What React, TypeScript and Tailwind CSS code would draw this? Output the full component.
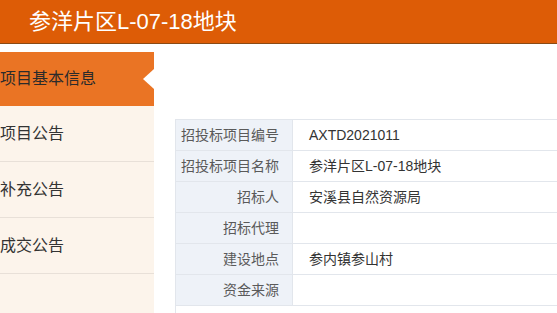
const menu = ["项目公告", "补充公告", "成交公告"];

const rows: [string, string][] = [
  ["招投标项目编号", "AXTD2021011"],
  ["招投标项目名称", "参洋片区L-07-18地块"],
  ["招标人", "安溪县自然资源局"],
  ["招标代理", ""],
  ["建设地点", "参内镇参山村"],
  ["资金来源", ""],
];

export default function App() {
  return (
    <div className="w-[557px] h-[313px] overflow-hidden bg-white font-['Liberation_Sans','Noto_Sans_CJK_SC',sans-serif]">
      <header className="h-[44px] bg-[#dd5c06] border-b border-[#8a4a14] flex items-center pl-[29px]">
        <h1 className="text-white text-[22px] leading-none">参洋片区L-07-18地块</h1>
      </header>

      <div className="flex mt-[8px]">
        <nav className="w-[154px] shrink-0 h-[300px] bg-[#fcf4eb]">
          <div className="relative h-[54px] bg-[#ea7424] flex items-center text-[16px] text-[#2b2b2b]">
            项目基本信息
            <span className="absolute right-0 top-[17px] w-0 h-0 border-y-[10px] border-y-transparent border-r-[11px] border-r-white" />
          </div>
          {menu.map((m) => (
            <div
              key={m}
              className="h-[56px] border-b border-[#e8e0d8] flex items-center text-[16px] text-[#333]"
            >
              {m}
            </div>
          ))}
        </nav>

        <div className="ml-[21px] mt-[67px] w-[420px] shrink-0 border-t border-l border-[#e2e6ec] text-[14px]">
          {rows.map(([k, v]) => (
            <div key={k} className="flex h-[31px] border-b border-[#e2e6ec]">
              <div className="w-[117px] shrink-0 bg-[#eef2f8] border-r border-[#e2e6ec] flex items-center justify-end pr-[13px] whitespace-nowrap text-[#5a5a5a]">
                {k}
              </div>
              <div className="flex-1 flex items-center pl-[16px] whitespace-nowrap text-[#333]">{v}</div>
            </div>
          ))}
        </div>
      </div>
    </div>
  );
}
